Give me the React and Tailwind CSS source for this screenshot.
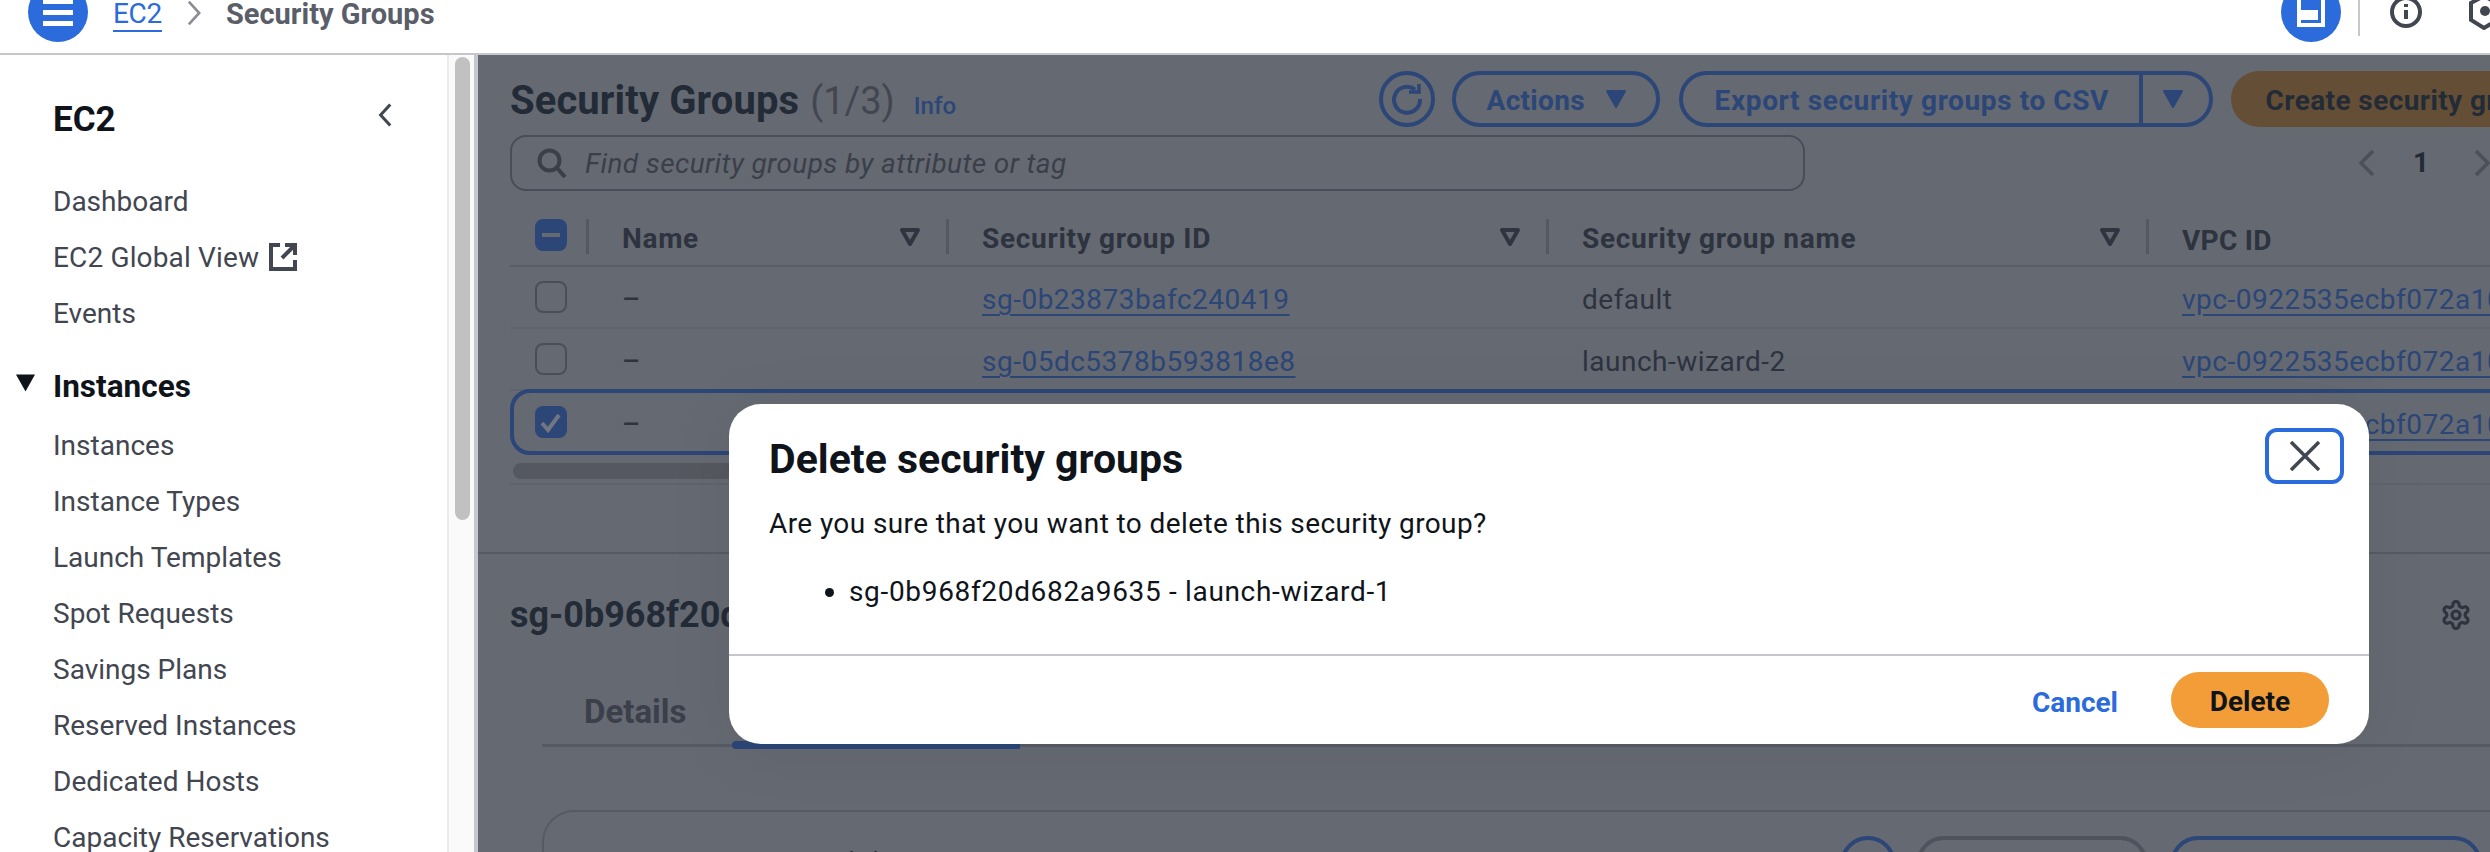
import React from "react";

const Tri = ({ className = "", color = "#2b4677" }) => (
  <svg viewBox="0 0 22 20" className={className}>
    <path d="M2 2h18L11 18z" fill={color} stroke={color} strokeWidth="2" strokeLinejoin="round" />
  </svg>
);
const SortTri = () => (
  <svg viewBox="0 0 20 18" className="w-[20px] h-[18px] flex-none">
    <path d="M2 2h16L10 16z" fill="none" stroke="#2f3540" strokeWidth="4" strokeLinejoin="round" />
  </svg>
);
const Box = ({ state }) => {
  if (state === "mixed")
    return (
      <div className="w-[32px] h-[32px] flex-none rounded-[8px] bg-[#2b4677] flex items-center justify-center">
        <div className="w-[18px] h-[4px] bg-[#656972]" />
      </div>
    );
  if (state === "checked")
    return (
      <div className="w-[32px] h-[32px] flex-none rounded-[8px] bg-[#2b4677] flex items-center justify-center">
        <svg viewBox="0 0 32 32" className="w-[32px] h-[32px]">
          <path d="M7 17l6 7L24 9" fill="none" stroke="#727681" strokeWidth="4" />
        </svg>
      </div>
    );
  return <div className="w-[32px] h-[32px] flex-none rounded-[8px] border-2 border-[#4a4e59]" />;
};
const Divider = () => <div className="w-[3px] h-[35px] bg-[#545862] flex-none" />;

const Nav = ({ children, className = "" }) => (
  <div className={"h-[56px] pt-[2px] flex items-center text-[28px] text-[#424650] whitespace-nowrap " + className}>{children}</div>
);

const headerCols = [
  { w: "w-[360px]", label: "Name" },
  { w: "w-[600px]", label: "Security group ID" },
  { w: "w-[600px]", label: "Security group name" },
];

const Row = ({ state, sg, name, border }) => (
  <div
    className={
      "flex-none w-[2300px] flex items-center text-[28px] text-[#2d333f] whitespace-nowrap tracking-[0.5px] " +
      (border ? "h-[66px] border-4 border-[#2b4677] rounded-[20px] -mt-[2px]" : "h-[62px] border-b-2 border-[#5f636d]")
    }
  >
    <div className={"flex-none " + (border ? "w-[108px] pl-[21px]" : "w-[112px] pl-[25px]")}>
      <Box state={state} />
    </div>
    <div className="w-[360px] flex-none pt-[6px] font-medium">–</div>
    <div className="w-[600px] flex-none pt-[6px] text-[#2b4677] underline underline-offset-[5px]">{sg}</div>
    <div className="w-[600px] flex-none pt-[6px]">{name}</div>
    <div className="flex-none pt-[6px] text-[#2b4677] underline underline-offset-[5px]">vpc-0922535ecbf072a10</div>
  </div>
);

export default function App() {
  return (
    <div className="relative w-[2490px] h-[852px] overflow-hidden bg-white flex flex-col font-['Roboto',sans-serif]">
      {/* top bar */}
      <header className="h-[55px] flex-none border-b-2 border-[#c6c6cd] flex items-start pl-[28px] bg-white overflow-hidden">
        <div className="-mt-[18px] w-[60px] h-[60px] rounded-full bg-[#2b6bdb] flex flex-col items-center justify-center gap-[6px] flex-none">
          <div className="w-[30px] h-[5px] bg-white" />
          <div className="w-[30px] h-[5px] bg-white" />
          <div className="w-[30px] h-[5px] bg-white" />
        </div>
        <span className="ml-[25px] text-[28px] leading-[28px] h-[32px] text-[#2b6bdb] border-b-2 border-[#2b6bdb] tracking-[-0.3px]">EC2</span>
        <svg viewBox="0 0 18 30" className="ml-[24px] w-[16px] h-[26px] flex-none">
          <path d="M3 2l12 13L3 28" fill="none" stroke="#8c8c94" strokeWidth="3" />
        </svg>
        <span className="ml-[24px] text-[29px] leading-[28px] font-bold text-[#5a5e68]">Security Groups</span>
        <div className="ml-auto -mt-[18px] w-[60px] h-[60px] rounded-full bg-[#2b6bdb] flex-none flex items-end justify-center pb-[15px]">
          <div className="w-[28px] h-[40px] border-[4px] border-white bg-[#2b6bdb] flex items-end justify-start">
            <div className="w-[17px] h-[10px] bg-white mb-[3px]" />
          </div>
        </div>
        <div className="ml-[17px] w-[2px] h-[36px] bg-[#c6c6cd] flex-none" />
        <svg viewBox="0 0 32 32" className="ml-[30px] -mt-[4px] w-[32px] h-[32px] flex-none">
          <circle cx="16" cy="16" r="14" fill="none" stroke="#424650" strokeWidth="4" />
          <path d="M16 14v9M16 8v3" stroke="#424650" strokeWidth="4" />
        </svg>
        <svg viewBox="0 0 32 36" className="ml-[46px] -mr-[10px] -mt-[6px] w-[32px] h-[36px] flex-none">
          <path d="M16 2l13 7v17l-13 8-13-8V9z" fill="none" stroke="#424650" strokeWidth="4" />
          <circle cx="17" cy="17" r="5" fill="#424650" />
        </svg>
      </header>

      <div className="flex-1 flex min-h-0">
        {/* side navigation */}
        <aside className="w-[449px] flex-none border-r-2 border-[#ebebeb] overflow-hidden pl-[53px] pr-[55px] bg-white">
          <div className="mt-[35px] h-[56px] flex items-center justify-between">
            <span className="text-[35px] font-bold text-[#0f141a] pt-[4px]">EC2</span>
            <svg viewBox="0 0 16 28" className="w-[14px] h-[26px] -mt-[6px]">
              <path d="M14 2L3 14l11 12" fill="none" stroke="#424650" strokeWidth="3.5" />
            </svg>
          </div>
          <div className="mt-[27px]">
            <Nav>Dashboard</Nav>
            <Nav>
              <span className="tracking-[0.15px]">EC2 Global View</span>
              <svg viewBox="0 0 28 28" className="ml-[10px] w-[28px] h-[28px] flex-none -mt-[2px]">
                <path d="M11 2H2v24h24v-9M16 2h10v10M26 2L13 15" fill="none" stroke="#424650" strokeWidth="4" />
              </svg>
            </Nav>
            <Nav>Events</Nav>
            <div className="mt-[17px] -ml-[38px] h-[56px] pt-[2px] flex items-center text-[31.5px] font-bold text-[#0f141a]">
              <svg viewBox="0 0 22 20" className="w-[21px] h-[20px] mr-[17px] -mt-[8px]">
                <path d="M1 1h20L11 19z" fill="#0f141a" />
              </svg>
              Instances
            </div>
            <div className="mt-[3px]">
              {["Instances", "Instance Types", "Launch Templates", "Spot Requests", "Savings Plans", "Reserved Instances", "Dedicated Hosts", "Capacity Reservations"].map((t) => (
                <Nav key={t}>{t}</Nav>
              ))}
            </div>
          </div>
        </aside>

        {/* scrollbar */}
        <div className="w-[25px] flex-none bg-[#fafafa] pl-[6px] pt-[2px]">
          <div className="w-[15px] h-[463px] rounded-full bg-[#c1c1c1]" />
        </div>

        {/* dimmed content */}
        <main className="flex-1 min-w-0 bg-[#656972] border-l-[4px] border-[#c6c6cd] overflow-hidden">
          <div className="pl-[32px] pt-[16px] w-[2012px]">
            <div className="w-[2070px] flex items-center h-[56px]">
              <div className="flex items-baseline whitespace-nowrap flex-1 pt-[3px]">
                <span className="text-[40px] font-bold text-[#232b37] tracking-[0.1px]">Security Groups</span>
                <span className="ml-[11px] text-[38px] text-[#424650]">(1/3)</span>
                <span className="ml-[19px] text-[24px] font-medium text-[#2b4677]">Info</span>
              </div>
              <div className="flex items-center flex-none text-[28px] font-bold text-[#2b4677] whitespace-nowrap">
                <div className="w-[56px] h-[56px] rounded-full border-4 border-[#2b4677] flex items-center justify-center">
                  <svg viewBox="0 0 32 32" className="w-[32px] h-[32px]">
                    <path d="M24 6.5A13 13 0 1 0 29 16" fill="none" stroke="#2b4677" strokeWidth="4" />
                    <path d="M18 9h10V1" fill="none" stroke="#2b4677" strokeWidth="3.5" />
                  </svg>
                </div>
                <div className="ml-[17px] w-[208px] h-[56px] pt-[3px] rounded-full border-4 border-[#2b4677] flex items-center pl-[31px] tracking-[0.3px]">
                  Actions
                  <Tri className="ml-[20px] w-[22px] h-[20px] -mt-[4px]" />
                </div>
                <div className="ml-[19px] w-[534px] h-[56px] rounded-full border-4 border-[#2b4677] flex items-center">
                  <div className="w-[460px] h-full pt-[3px] flex items-center pl-[32px] border-r-4 border-[#2b4677] tracking-[0.6px]">Export security groups to CSV</div>
                  <Tri className="ml-[19px] w-[22px] h-[20px]" />
                </div>
                <div className="ml-[18px] h-[56px] pt-[3px] rounded-full bg-[#644f36] flex items-center px-[35px] text-[#232b37] tracking-[0.4px]">Create security group</div>
              </div>
            </div>

            <div className="mt-[8px] flex items-center h-[56px]">
              <div className="w-[1295px] h-[56px] rounded-[16px] border-2 border-[#484d59] flex items-center pl-[25px] flex-none">
                <svg viewBox="0 0 30 30" className="w-[30px] h-[30px] flex-none">
                  <circle cx="12.5" cy="12.5" r="10" fill="none" stroke="#3a3f4a" strokeWidth="4" />
                  <path d="M20 20l8 9" stroke="#3a3f4a" strokeWidth="4" />
                </svg>
                <span className="ml-[18px] pt-[2px] text-[28px] italic text-[#3a3f4a] whitespace-nowrap tracking-[0.4px]">Find security groups by attribute or tag</span>
              </div>
              <svg viewBox="0 0 18 28" className="ml-[553px] w-[18px] h-[28px] flex-none">
                <path d="M15 2L3 14l12 12" fill="none" stroke="#4c505a" strokeWidth="3.5" />
              </svg>
              <span className="ml-[37px] text-[28px] font-bold text-[#232b37]">1</span>
              <svg viewBox="0 0 18 28" className="ml-[44px] w-[18px] h-[28px] flex-none">
                <path d="M3 2l12 12L3 26" fill="none" stroke="#4c505a" strokeWidth="3.5" />
              </svg>
            </div>

            {/* table */}
            <div className="mt-[28px] w-[2300px] flex flex-col">
              <div className="h-[48px] border-b-2 border-[#595d67] flex items-start text-[28px] font-bold text-[#2d333f] whitespace-nowrap">
                <div className="w-[79px] flex-none pl-[25px] flex items-start justify-between">
                  <Box state="mixed" />
                  <Divider />
                </div>
                {headerCols.map((c) => (
                  <div key={c.label} className={c.w + " flex-none h-[35px] flex items-center justify-between"}>
                    <span className="pl-[33px] pt-[4px] leading-[35px] tracking-[0.7px]">{c.label}</span>
                    <div className="flex items-center gap-[26px]">
                      <SortTri />
                      <Divider />
                    </div>
                  </div>
                ))}
                <span className="pl-[33px] pt-[4px] leading-[35px] tracking-[0.3px]">VPC ID</span>
              </div>
              <Row state="none" sg="sg-0b23873bafc240419" name="default" />
              <Row state="none" sg="sg-05dc5378b593818e8" name="launch-wizard-2" />
              <Row state="checked" sg="sg-0b968f20d682a9635" name="launch-wizard-1" border />
              <div className="mt-[8px] ml-[3px] w-[1000px] h-[16px] bg-[#555860] rounded-l-[8px]" />
              <div className="mt-[4px] h-[2px] bg-[#5f636d]" />
            </div>
          </div>

          <div className="mt-[67px] border-t-2 border-[#565a64] pl-[32px] w-[2012px]">
            <div className="pt-[33px] pr-[18px] flex items-center justify-between h-[88px]">
              <span className="text-[36px] font-bold text-[#232b37] whitespace-nowrap">sg-0b968f20d682a9635 - launch-wizard-1</span>
              <svg viewBox="0 0 24 24" className="w-[32px] h-[32px] flex-none" fill="none" stroke="#2d333f" strokeWidth="2.4">
                <path d="M12.22 2h-.44a2 2 0 0 0-2 2v.18a2 2 0 0 1-1 1.73l-.43.25a2 2 0 0 1-2 0l-.15-.08a2 2 0 0 0-2.73.73l-.22.38a2 2 0 0 0 .73 2.73l.15.1a2 2 0 0 1 1 1.72v.51a2 2 0 0 1-1 1.74l-.15.09a2 2 0 0 0-.73 2.73l.22.38a2 2 0 0 0 2.73.73l.15-.08a2 2 0 0 1 2 0l.43.25a2 2 0 0 1 1 1.73V20a2 2 0 0 0 2 2h.44a2 2 0 0 0 2-2v-.18a2 2 0 0 1 1-1.73l.43-.25a2 2 0 0 1 2 0l.15.08a2 2 0 0 0 2.73-.73l.22-.39a2 2 0 0 0-.73-2.73l-.15-.08a2 2 0 0 1-1-1.74v-.5a2 2 0 0 1 1-1.74l.15-.09a2 2 0 0 0 .73-2.73l-.22-.38a2 2 0 0 0-2.73-.73l-.15.08a2 2 0 0 1-2 0l-.43-.25a2 2 0 0 1-1-1.73V4a2 2 0 0 0-2-2z" />
                <circle cx="12" cy="12" r="3" />
              </svg>
            </div>
            <div className="ml-[32px] mt-[20px] border-b-[3px] border-[#565a64] h-[85px] flex items-start w-[1980px]">
              <span className="ml-[42px] mt-[25px] text-[33px] font-bold text-[#3a3f4a] w-[148px]">Details</span>
              <div className="mt-[79px] w-[288px] h-[8px] rounded-l-full bg-[#2b4677]" />
            </div>
            <div className="ml-[32px] mt-[63px] w-[2100px] h-[120px] rounded-tl-[32px] border-t-2 border-l-2 border-[#565a64] pl-[80px] pr-[160px] flex">
              <span className="mt-[33px] text-[34px] leading-[40px] font-bold text-[#232b37] whitespace-nowrap">Inbound rules (1)</span>
              <div className="ml-auto mt-[24px] flex items-start">
                <div className="w-[56px] h-[56px] rounded-full border-4 border-[#2b4677]" />
                <div className="ml-[20px] w-[232px] h-[56px] rounded-[28px] border-4 border-[#50535e]" />
                <div className="ml-[22px] w-[312px] h-[56px] rounded-[28px] border-4 border-[#2b4677]" />
              </div>
            </div>
          </div>
        </main>
      </div>

      {/* dialog */}
      <div className="absolute left-[729px] top-[404px] w-[1640px] h-[340px] rounded-[32px] bg-white flex flex-col shadow-[0_6px_70px_rgba(0,0,0,0.06)]">
        <div className="flex-1 relative pl-[40px] pt-[31px]">
          <div className="text-[41px] leading-[48px] font-bold text-[#0f141a]">Delete security groups</div>
          <div className="mt-[23px] text-[28px] leading-[36px] text-[#0f141a] tracking-[0.4px]">Are you sure that you want to delete this security group?</div>
          <ul className="mt-[32px] ml-[80px] list-disc text-[28px] leading-[36px] text-[#0f141a] tracking-[0.67px]">
            <li>sg-0b968f20d682a9635 - launch-wizard-1</li>
          </ul>
          <div className="absolute left-[1536px] top-[24px] w-[79px] h-[56px] rounded-[12px] border-4 border-[#2b6bdb] flex items-center justify-center">
            <svg viewBox="0 0 32 32" className="w-[32px] h-[32px]">
              <path d="M2 2l28 28M30 2L2 30" stroke="#424650" strokeWidth="3.5" />
            </svg>
          </div>
        </div>
        <div className="h-[90px] flex-none border-t-2 border-[#c6c6cd] flex items-center justify-end pr-[40px]">
          <span className="text-[28px] font-bold text-[#2b6bdb] mt-[5px]">Cancel</span>
          <div className="ml-[53px] w-[158px] h-[56px] pt-[3px] rounded-full bg-[#f29d38] flex items-center justify-center text-[28px] font-bold text-[#0f141a]">Delete</div>
        </div>
      </div>
    </div>
  );
}
